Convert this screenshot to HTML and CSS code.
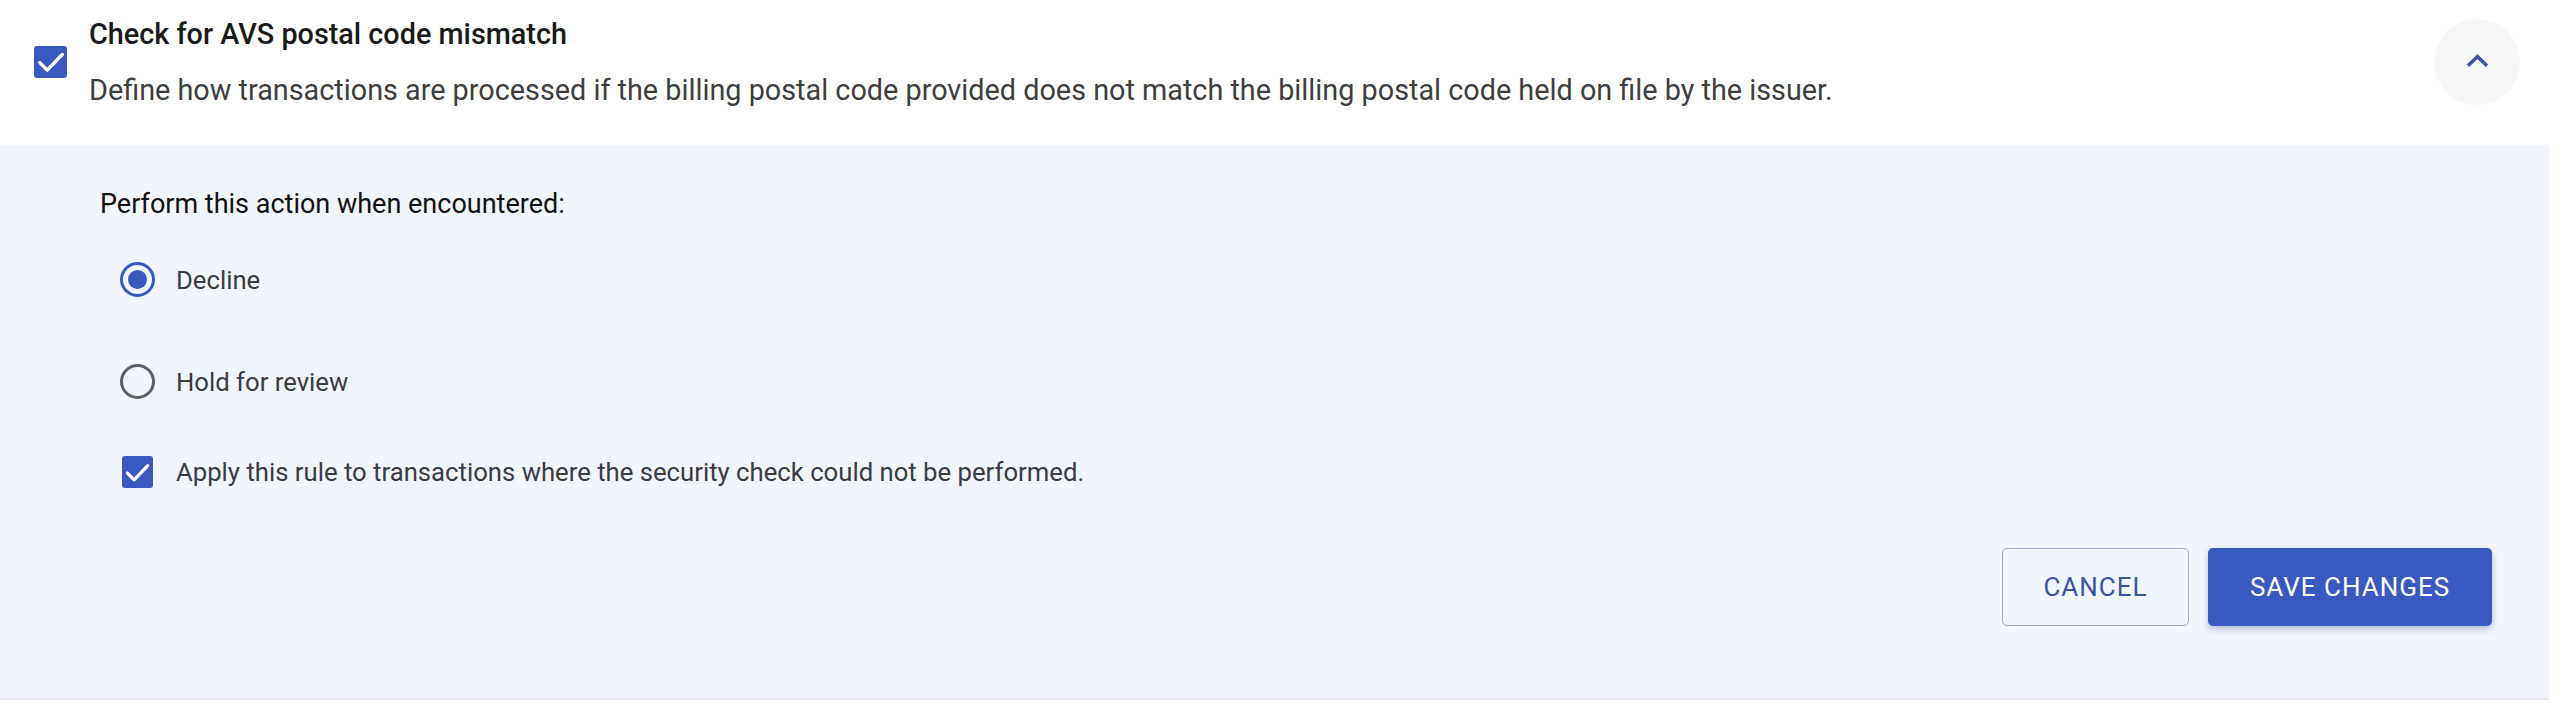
FILE: index.html
```html
<!DOCTYPE html>
<html lang="en">
<head>
<meta charset="utf-8">
<title>AVS postal code mismatch</title>
<link rel="stylesheet" href="styles.css">
</head>
<body>
<div class="card">
  <div class="header">
    <span class="checkbox checkbox-lg">
      <svg viewBox="0 0 24 24" width="30" height="30"><path d="M3 12.5l6 6L21 6" fill="none" stroke="#fff" stroke-width="2.8" stroke-linecap="round" stroke-linejoin="round"/></svg>
    </span>
    <div class="header-text">
      <div class="title">Check for AVS postal code mismatch</div>
      <div class="desc">Define how transactions are processed if the billing postal code provided does not match the billing postal code held on file by the issuer.</div>
    </div>
    <button class="collapse" aria-label="Collapse">
      <svg viewBox="0 0 24 14" width="23" height="14"><path d="M2 12L12 2.5 22 12" fill="none" stroke="#3b55a5" stroke-width="3.6"/></svg>
    </button>
  </div>
  <div class="panel">
    <div class="label">Perform this action when encountered:</div>
    <div class="options">
      <div class="option">
        <span class="slot"><span class="radio radio-on"><span class="dot"></span></span></span>
        <span class="opt-text">Decline</span>
      </div>
      <div class="option option-second">
        <span class="slot"><span class="radio"></span></span>
        <span class="opt-text">Hold for review</span>
      </div>
      <div class="option option-check">
        <span class="slot">
          <span class="checkbox checkbox-sm">
            <svg viewBox="0 0 24 24" width="27" height="27"><path d="M3 12.5l6 6L21 6" fill="none" stroke="#fff" stroke-width="2.9" stroke-linecap="round" stroke-linejoin="round"/></svg>
          </span>
        </span>
        <span class="opt-text">Apply this rule to transactions where the security check could not be performed.</span>
      </div>
    </div>
    <div class="actions">
      <button class="btn btn-outline">CANCEL</button>
      <button class="btn btn-primary">SAVE CHANGES</button>
    </div>
  </div>
</div>
</body>
</html>
```

FILE: styles.css
```css
html, body {
  margin: 0;
  padding: 0;
  background: #ffffff;
}
body {
  font-family: Roboto, "Noto Sans", "Liberation Sans", sans-serif;
  height: 710px;
  overflow: hidden;
}
.card {
  width: 2549px;
}
.header {
  display: flex;
  align-items: center;
  padding: 16px 29px 37px 34px;
  background: #ffffff;
}
.checkbox {
  display: inline-flex;
  align-items: center;
  justify-content: center;
  background: #3a59c0;
  border-radius: 3px;
  flex: none;
}
.checkbox svg {
  display: block;
  flex: none;
}
.checkbox-lg {
  width: 33px;
  height: 32px;
}
.checkbox-sm {
  width: 31px;
  height: 32px;
}
.header-text {
  flex: 1;
  margin-left: 22px;
  display: flex;
  flex-direction: column;
  gap: 20px;
}
.title {
  font-size: 28.8px;
  line-height: 36px;
  font-weight: 500;
  color: #1a1a1a;
}
.desc {
  font-size: 28.8px;
  line-height: 36px;
  color: #3e3e3e;
}
.collapse {
  width: 86px;
  height: 86px;
  border-radius: 50%;
  border: none;
  background: #f6f7f9;
  display: flex;
  align-items: center;
  justify-content: center;
  padding: 0 0 2px 0;
  flex: none;
}
.panel {
  background: #f1f5fe;
  padding: 41px 57px 72px 100px;
  border-bottom: 2px solid #ebe8f3;
}
.label {
  font-size: 27px;
  line-height: 36px;
  color: #111111;
}
.options {
  display: flex;
  flex-direction: column;
  margin-top: 40px;
  padding-left: 20px;
}
.option {
  display: flex;
  align-items: center;
  height: 35px;
}
.option-second {
  margin-top: 67px;
}
.option-check {
  margin-top: 55px;
  height: 36px;
}
.slot {
  width: 35px;
  height: 35px;
  display: flex;
  align-items: center;
  justify-content: center;
  flex: none;
}
.radio {
  width: 35px;
  height: 35px;
  box-sizing: border-box;
  border: 3.5px solid #5f5f62;
  border-radius: 50%;
  display: flex;
  align-items: center;
  justify-content: center;
}
.radio-on {
  border-color: #3a59c0;
}
.dot {
  width: 19px;
  height: 19px;
  border-radius: 50%;
  background: #3a59c0;
}
.opt-text {
  margin-left: 21px;
  font-size: 25.7px;
  line-height: 36px;
  color: #3b3b42;
}
.actions {
  display: flex;
  justify-content: flex-end;
  gap: 19px;
  margin-top: 58px;
}
.btn {
  height: 78px;
  font-family: Roboto, "Noto Sans", "Liberation Sans", sans-serif;
  font-size: 26px;
  letter-spacing: 1px;
  border-radius: 5px;
  padding: 0 40px;
  box-sizing: border-box;
}
.btn-outline {
  width: 187px;
  background: transparent;
  border: 1.5px solid #a3abc8;
  color: #3b55a5;
}
.btn-primary {
  width: 284px;
  background: #3a59c0;
  border: none;
  color: #ffffff;
  box-shadow: 0 3px 6px rgba(40, 50, 90, 0.3);
}
```
